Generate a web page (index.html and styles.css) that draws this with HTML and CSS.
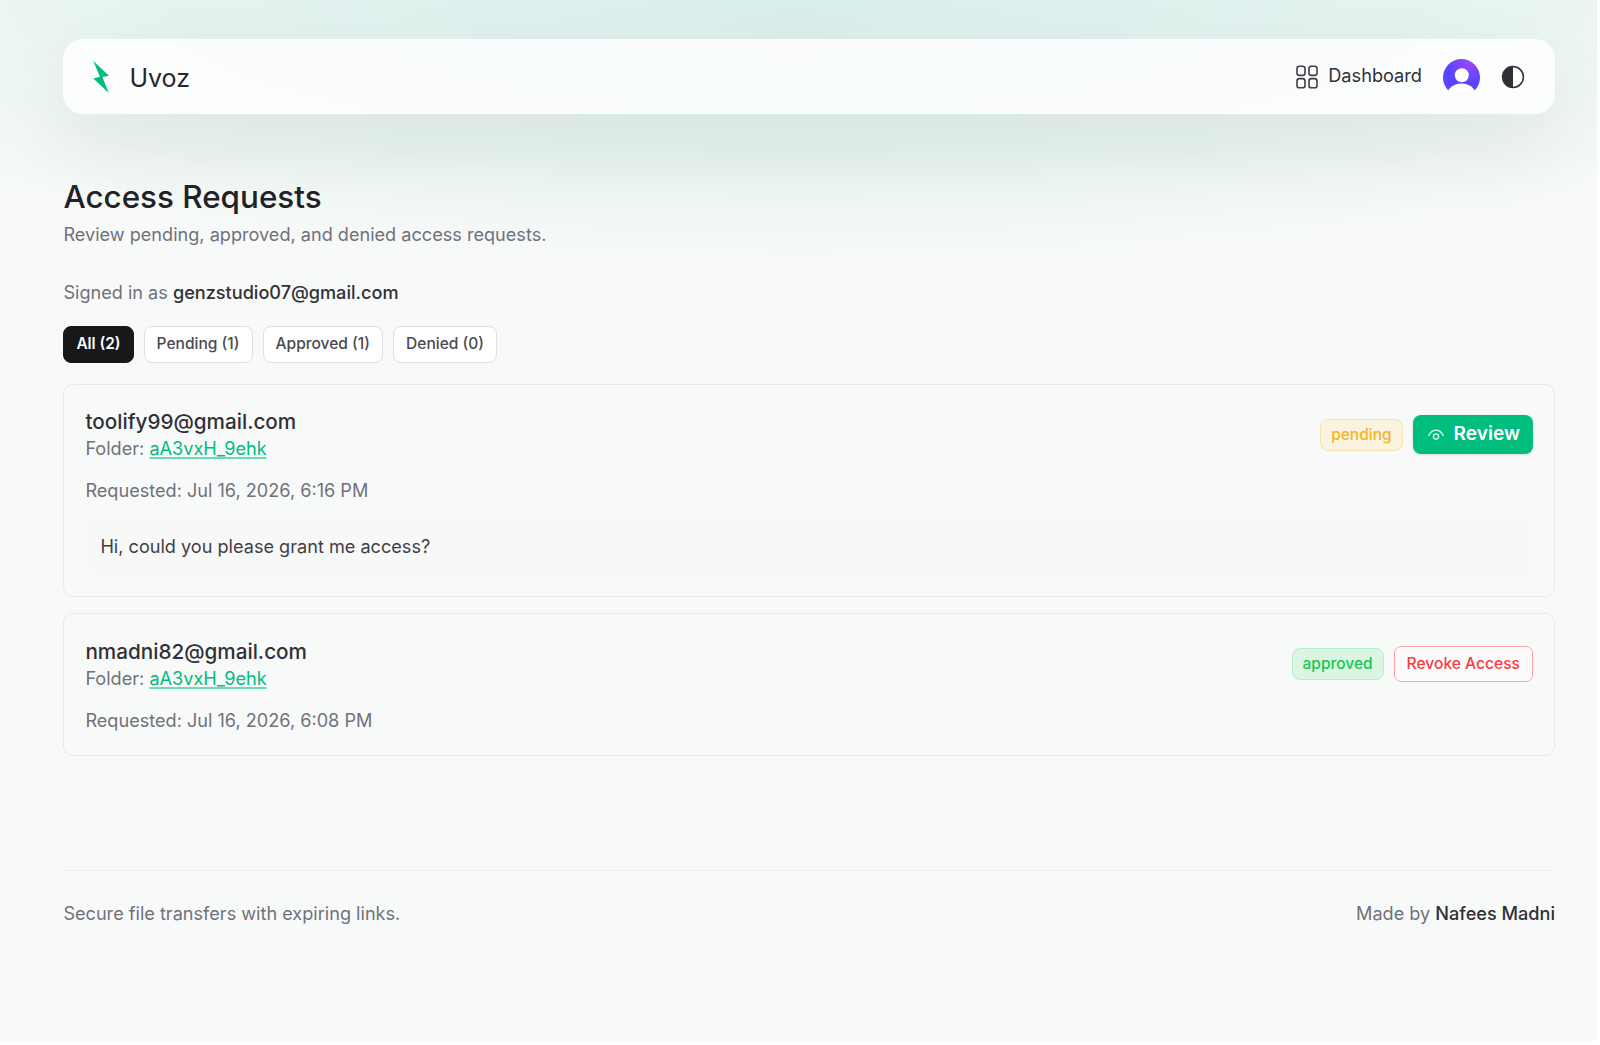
FILE: index.html
```
<!DOCTYPE html>
<html lang="en">
<head>
    <meta charset="UTF-8">
    <meta name="viewport" content="width=device-width, initial-scale=1.0">
    <title>Access Requests - Uvoz</title>
    <link rel="stylesheet" href="styles.css">
</head>
<body>
    <div class="page">
        <header class="navbar">
            <a class="brand" href="#">
                <svg class="brand-icon" width="16" height="32" viewBox="0 0 16 32">
                    <path d="M0.3 0 L16 14.8 L9.4 16 L15.8 32 L0.3 17.4 L7 15.8 Z" fill="#00bc7d"/>
                </svg>
                <span class="brand-name">Uvoz</span>
            </a>
            <nav class="nav-links">
                <a class="dashboard" href="#">
                    <svg width="22" height="24" viewBox="0 0 22 24" fill="none" stroke="#3f3f46" stroke-width="1.6">
                        <rect x="1" y="1.2" width="8" height="9.2" rx="2.4"/>
                        <rect x="13" y="1.2" width="8" height="9.2" rx="2.4"/>
                        <rect x="1" y="13.6" width="8" height="9.2" rx="2.4"/>
                        <rect x="13" y="13.6" width="8" height="9.2" rx="2.4"/>
                    </svg>
                    <span>Dashboard</span>
                </a>
                <svg class="avatar" width="37" height="33" viewBox="0 0 37 33">
                    <defs>
                        <radialGradient id="avatarFill" cx="0.7" cy="0.15" r="0.6">
                            <stop offset="0" stop-color="#9b46ff"/>
                            <stop offset="1" stop-color="#5a43fd"/>
                        </radialGradient>
                        <clipPath id="avatarClip"><circle cx="18.5" cy="18.5" r="18.5"/></clipPath>
                    </defs>
                    <g clip-path="url(#avatarClip)">
                        <rect width="37" height="32" fill="url(#avatarFill)"/>
                        <circle cx="18.8" cy="16.3" r="7" fill="#fff"/>
                        <circle cx="18.5" cy="41.3" r="16.8" fill="#fff"/>
                    </g>
                </svg>
                <svg class="theme" width="24" height="24" viewBox="0 0 24 24">
                    <circle cx="12" cy="12" r="10.4" fill="none" stroke="#303036" stroke-width="1.5"/>
                    <path d="M12 1.6 A10.4 10.4 0 0 0 12 22.4 Z" fill="#303036"/>
                </svg>
            </nav>
        </header>

        <main>
            <h1>Access Requests</h1>
            <p class="subtitle">Review pending, approved, and denied access requests.</p>
            <p class="signed-in">Signed in as <span>genzstudio07@gmail.com</span></p>

            <div class="filters">
                <button class="filter active">All (2)</button>
                <button class="filter">Pending (1)</button>
                <button class="filter">Approved (1)</button>
                <button class="filter">Denied (0)</button>
            </div>

            <section class="card">
                <div class="card-top">
                    <div class="info">
                        <h2>toolify99@gmail.com</h2>
                        <p class="folder">Folder: <a href="#">aA3vxH_9ehk</a></p>
                        <p class="requested">Requested: Jul 16, 2026, 6:16 PM</p>
                    </div>
                    <div class="actions">
                        <span class="badge pending">pending</span>
                        <button class="review">
                            <svg width="16" height="12" viewBox="0 0 16 12" fill="none" stroke="#c9f5e4" stroke-width="1.4" stroke-linecap="round">
                                <path d="M0.8 6.6 C3.8 -0.6 12.2 -0.6 15.2 6.6"/>
                                <circle cx="8" cy="7.6" r="2.6"/>
                            </svg>
                            <span>Review</span>
                        </button>
                    </div>
                </div>
                <p class="message">Hi, could you please grant me access?</p>
            </section>

            <section class="card">
                <div class="card-top">
                    <div class="info">
                        <h2>nmadni82@gmail.com</h2>
                        <p class="folder">Folder: <a href="#">aA3vxH_9ehk</a></p>
                        <p class="requested">Requested: Jul 16, 2026, 6:08 PM</p>
                    </div>
                    <div class="actions">
                        <span class="badge approved">approved</span>
                        <button class="revoke">Revoke Access</button>
                    </div>
                </div>
            </section>
        </main>

        <footer>
            <span>Secure file transfers with expiring links.</span>
            <span>Made by <b>Nafees Madni</b></span>
        </footer>
    </div>
</body>
</html>
```
FILE: styles.css
```
* {
    box-sizing: border-box;
    margin: 0;
    padding: 0;
}
html {
    background: #fff;
}
body {
    height: 1045px;
    overflow: hidden;
    padding: 0 3px 4px 0;
    font-family: Inter, "Liberation Sans", sans-serif;
    font-size: 18.12px;
    line-height: 26px;
    color: #71717b;
}
.page {
    height: 1041px;
    padding: 39px 42px 0 63.4px;
    background:
        radial-gradient(ellipse 1180px 270px at 50% 0, rgba(0, 160, 150, 0.13), rgba(0, 160, 130, 0.075) 55%, rgba(0, 160, 120, 0) 100%),
        #f8faf9;
}
a {
    color: inherit;
    text-decoration: none;
}
button {
    font-family: inherit;
    cursor: pointer;
}

/* header */
.navbar {
    display: flex;
    justify-content: space-between;
    align-items: center;
    height: 75px;
    padding: 0 30px 0 30px;
    border-radius: 20px;
    background: rgba(255, 255, 255, 0.84);
    box-shadow: 0 32px 80px rgba(24, 24, 27, 0.07);
}
.brand {
    display: flex;
    align-items: center;
    gap: 20px;
}
.brand-name {
    padding-top: 2px;
    font-size: 25px;
    color: #27272a;
}
.nav-links {
    display: flex;
    align-items: center;
}
.dashboard {
    display: flex;
    align-items: center;
    gap: 10px;
    margin-right: 21px;
    font-size: 18.2px;
    color: #303036;
}
.dashboard span {
    padding-bottom: 3px;
}
.avatar {
    margin: 0 21px 2px 0;
}

/* page heading */
h1 {
    margin-top: 62px;
    font-size: 31.4px;
    line-height: 42px;
    font-weight: 500;
    color: #222226;
}
.subtitle {
    margin-top: 3px;
}
.signed-in {
    margin-top: 32px;
}
.signed-in span {
    font-weight: 500;
    color: #303036;
}

.filters {
    display: flex;
    gap: 10px;
    margin-top: 21px;
}
.filter {
    height: 37px;
    padding: 0 12px 2px;
    font-size: 15.55px;
    font-weight: 500;
    color: #4a4a51;
    background: #fff;
    border: 1px solid #dedfe0;
    border-radius: 8px;
}
.filter.active {
    font-size: 15.4px;
    font-weight: 600;
    color: #fff;
    background: #18181b;
    border-color: #18181b;
}

/* request cards */
.card {
    margin-top: 16px;
    padding: 24px 21px 22px;
    border: 1px solid #e8eae9;
    border-radius: 10px;
}
.filters + .card {
    margin-top: 21px;
    padding: 23px 21px 20px;
}
.card-top {
    display: flex;
    justify-content: space-between;
    align-items: flex-start;
}
h2 {
    font-size: 20.7px;
    line-height: 28px;
    font-weight: 500;
    color: #303036;
}
.folder {
    margin-top: -1px;
}
.folder a {
    color: #00bc7d;
    text-decoration: underline;
    text-decoration-color: #6fd9b2;
    text-decoration-thickness: 2px;
    text-underline-offset: 2px;
}
.requested {
    margin-top: 16px;
}
.message {
    margin-top: 16px;
    padding: 14px 15px 17px;
    color: #3f3f46;
    background: #f7f9f8;
    border-radius: 8px;
}
.actions {
    display: flex;
    align-items: center;
    gap: 10px;
    margin-top: 7px;
}
.card + .card .actions {
    margin-top: 8px;
}
.badge {
    height: 32px;
    padding: 0 10px;
    font-size: 15.5px;
    line-height: 29px;
    font-weight: 500;
    border: 1px solid;
    border-radius: 8px;
}
.pending {
    color: #f5b325;
    background: #f9f3e0;
    border-color: #f8e3ab;
}
.approved {
    color: #12c850;
    background: #dcf5e3;
    border-color: #b5efcb;
}
.review {
    display: flex;
    align-items: center;
    gap: 10px;
    height: 39px;
    padding: 0 13px 0 15px;
    font-size: 19.1px;
    font-weight: 600;
    color: #fff;
    background: #00bc7d;
    border: none;
    border-radius: 8px;
    box-shadow: 0 1px 3px rgba(0, 0, 0, 0.12);
}
.review span {
    padding-bottom: 3px;
}
.revoke {
    height: 36px;
    padding: 0 12px 1px;
    font-size: 15.6px;
    font-weight: 500;
    color: #fb3b42;
    background: #fcfcfc;
    border: 1px solid #ffa2a6;
    border-radius: 7px;
}

footer {
    display: flex;
    justify-content: space-between;
    margin-top: 114px;
    padding-top: 29px;
    border-top: 1px solid #eef0ef;
}
footer b {
    font-weight: 500;
    color: #303036;
}
```
